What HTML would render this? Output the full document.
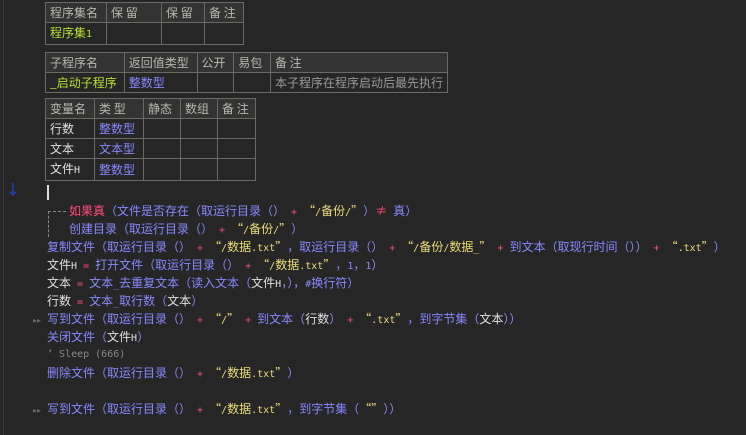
<!DOCTYPE html><html><head><meta charset="utf-8"><style>
body{margin:0;width:746px;height:435px;background:#262626;overflow:hidden;position:relative;font-family:"Noto Sans CJK SC","Liberation Sans",sans-serif;font-size:12px;color:#e0e0e0}
.vl{position:absolute;left:3px;top:0;width:1px;height:435px;background:#3a3a3a}
table{position:absolute;border-collapse:collapse;font-size:12px}
td{border:1px solid #6a6a62;padding:0 4px;height:19px;line-height:19px;white-space:nowrap;color:#e0e0e0}
tr.h td{background:#333;color:#b8b8b0}
.g{color:#b8e030}.b{color:#8888ff}.gr{color:#999}
.l{position:absolute;white-space:pre;line-height:18px;height:18px}
.r{color:#ff4a7a}.y{color:#ecdc78}.w{color:#e0e0e0}
.m{font-family:"DejaVu Sans Mono",monospace;font-size:10px}
.c{color:#8a8a8a;font-family:"DejaVu Sans Mono",monospace;font-size:10px}
i{font-style:normal;display:inline-block;width:12px}
i.o{text-align:right}i.e{text-align:left}
.ar{position:absolute;color:#666;font-size:8px}
</style></head><body>
<div class="vl"></div>
<table style="left:45px;top:2px;width:199px"><tr class="h"><td style="width:52px">程序集名</td><td style="width:46px">保 留</td><td style="width:34px">保 留</td><td>备 注</td></tr><tr><td class="g">程序集<span class="m">1</span></td><td></td><td></td><td></td></tr></table>
<table style="left:45px;top:52px;width:403px"><tr class="h"><td style="width:70px">子程序名</td><td style="width:64px">返回值类型</td><td style="width:28px">公开</td><td style="width:28px">易包</td><td>备 注</td></tr><tr><td class="g">_启动子程序</td><td class="b">整数型</td><td></td><td></td><td class="gr">本子程序在程序启动后最先执行</td></tr></table>
<table style="left:45px;top:98px;width:211px"><tr class="h"><td style="width:40px">变量名</td><td style="width:40px">类 型</td><td style="width:28px">静态</td><td style="width:28px">数组</td><td>备 注</td></tr><tr><td>行数</td><td class="b">整数型</td><td></td><td></td><td></td></tr><tr><td>文本</td><td class="b">文本型</td><td></td><td></td><td></td></tr><tr><td>文件<span class="m">H</span></td><td class="b">整数型</td><td></td><td></td><td></td></tr></table>
<div style="position:absolute;left:6px;top:180px;color:#2040c0;font-size:14px;font-weight:bold">↓</div>
<div style="position:absolute;left:47px;top:185px;width:2px;height:15px;background:#ddd"></div>
<div style="position:absolute;left:48px;top:211px;width:18px;border-top:1px dashed #888"></div>
<div style="position:absolute;left:48px;top:211px;height:26px;border-left:1px dashed #888"></div>
<div class="l" style="left:69px;top:202px"><span class="r">如果真</span><span class="b">（文件是否存在（取运行目录（）</span><span class="r m"> + </span><span class="y"><i class="o">“</i><span class="m">/</span>备份<span class="m">/</span><i class="e">”</i></span><span class="b">）</span><span class="r">≠</span><span class="m"> </span><span class="b">真）</span></div>
<div class="l" style="left:69px;top:220px"><span class="b">创建目录（取运行目录（）</span><span class="r m"> + </span><span class="y"><i class="o">“</i><span class="m">/</span>备份<span class="m">/</span><i class="e">”</i></span><span class="b">）</span></div>
<div class="l" style="left:47px;top:238px"><span class="b">复制文件（取运行目录（）</span><span class="r m"> + </span><span class="y"><i class="o">“</i><span class="m">/</span>数据<span class="m">.txt</span><i class="e">”</i></span><span class="b">，取运行目录（）</span><span class="r m"> + </span><span class="y"><i class="o">“</i><span class="m">/</span>备份<span class="m">/</span>数据<span class="m">_</span><i class="e">”</i></span><span class="r m"> + </span><span class="b">到文本（取现行时间（））</span><span class="r m"> + </span><span class="y"><i class="o">“</i><span class="m">.txt</span><i class="e">”</i></span><span class="b">）</span></div>
<div class="l" style="left:47px;top:256px"><span class="w">文件<span class="m">H</span></span><span class="r m"> = </span><span class="b">打开文件（取运行目录（）</span><span class="r m"> + </span><span class="y"><i class="o">“</i><span class="m">/</span>数据<span class="m">.txt</span><i class="e">”</i></span><span class="b">，<span class="m">1</span>，<span class="m">1</span>）</span></div>
<div class="l" style="left:47px;top:274px"><span class="w">文本</span><span class="r m"> = </span><span class="b">文本<span class="m">_</span>去重复文本（读入文本（</span><span class="w">文件<span class="m">H</span></span><span class="b">，），<span class="m">#</span>换行符）</span></div>
<div class="l" style="left:47px;top:292px"><span class="w">行数</span><span class="r m"> = </span><span class="b">文本<span class="m">_</span>取行数（</span><span class="w">文本</span><span class="b">）</span></div>
<div class="ar" style="left:33px;top:315px">▸▸</div>
<div class="l" style="left:47px;top:310px"><span class="b">写到文件（取运行目录（）</span><span class="r m"> + </span><span class="y"><i class="o">“</i><span class="m">/</span><i class="e">”</i></span><span class="r m"> + </span><span class="b">到文本（</span><span class="w">行数</span><span class="b">）</span><span class="r m"> + </span><span class="y"><i class="o">“</i><span class="m">.txt</span><i class="e">”</i></span><span class="b">，到字节集（</span><span class="w">文本</span><span class="b">））</span></div>
<div class="l" style="left:47px;top:328px"><span class="b">关闭文件（</span><span class="w">文件<span class="m">H</span></span><span class="b">）</span></div>
<div class="l c" style="left:47px;top:346px">’ Sleep (666)</div>
<div class="l" style="left:47px;top:364px"><span class="b">删除文件（取运行目录（）</span><span class="r m"> + </span><span class="y"><i class="o">“</i><span class="m">/</span>数据<span class="m">.txt</span><i class="e">”</i></span><span class="b">）</span></div>
<div class="ar" style="left:33px;top:405px">▸▸</div>
<div class="l" style="left:47px;top:400px"><span class="b">写到文件（取运行目录（）</span><span class="r m"> + </span><span class="y"><i class="o">“</i><span class="m">/</span>数据<span class="m">.txt</span><i class="e">”</i></span><span class="b">，到字节集（</span><span class="y"><i class="o">“</i><i class="e">”</i></span><span class="b">））</span></div>
</body></html>
